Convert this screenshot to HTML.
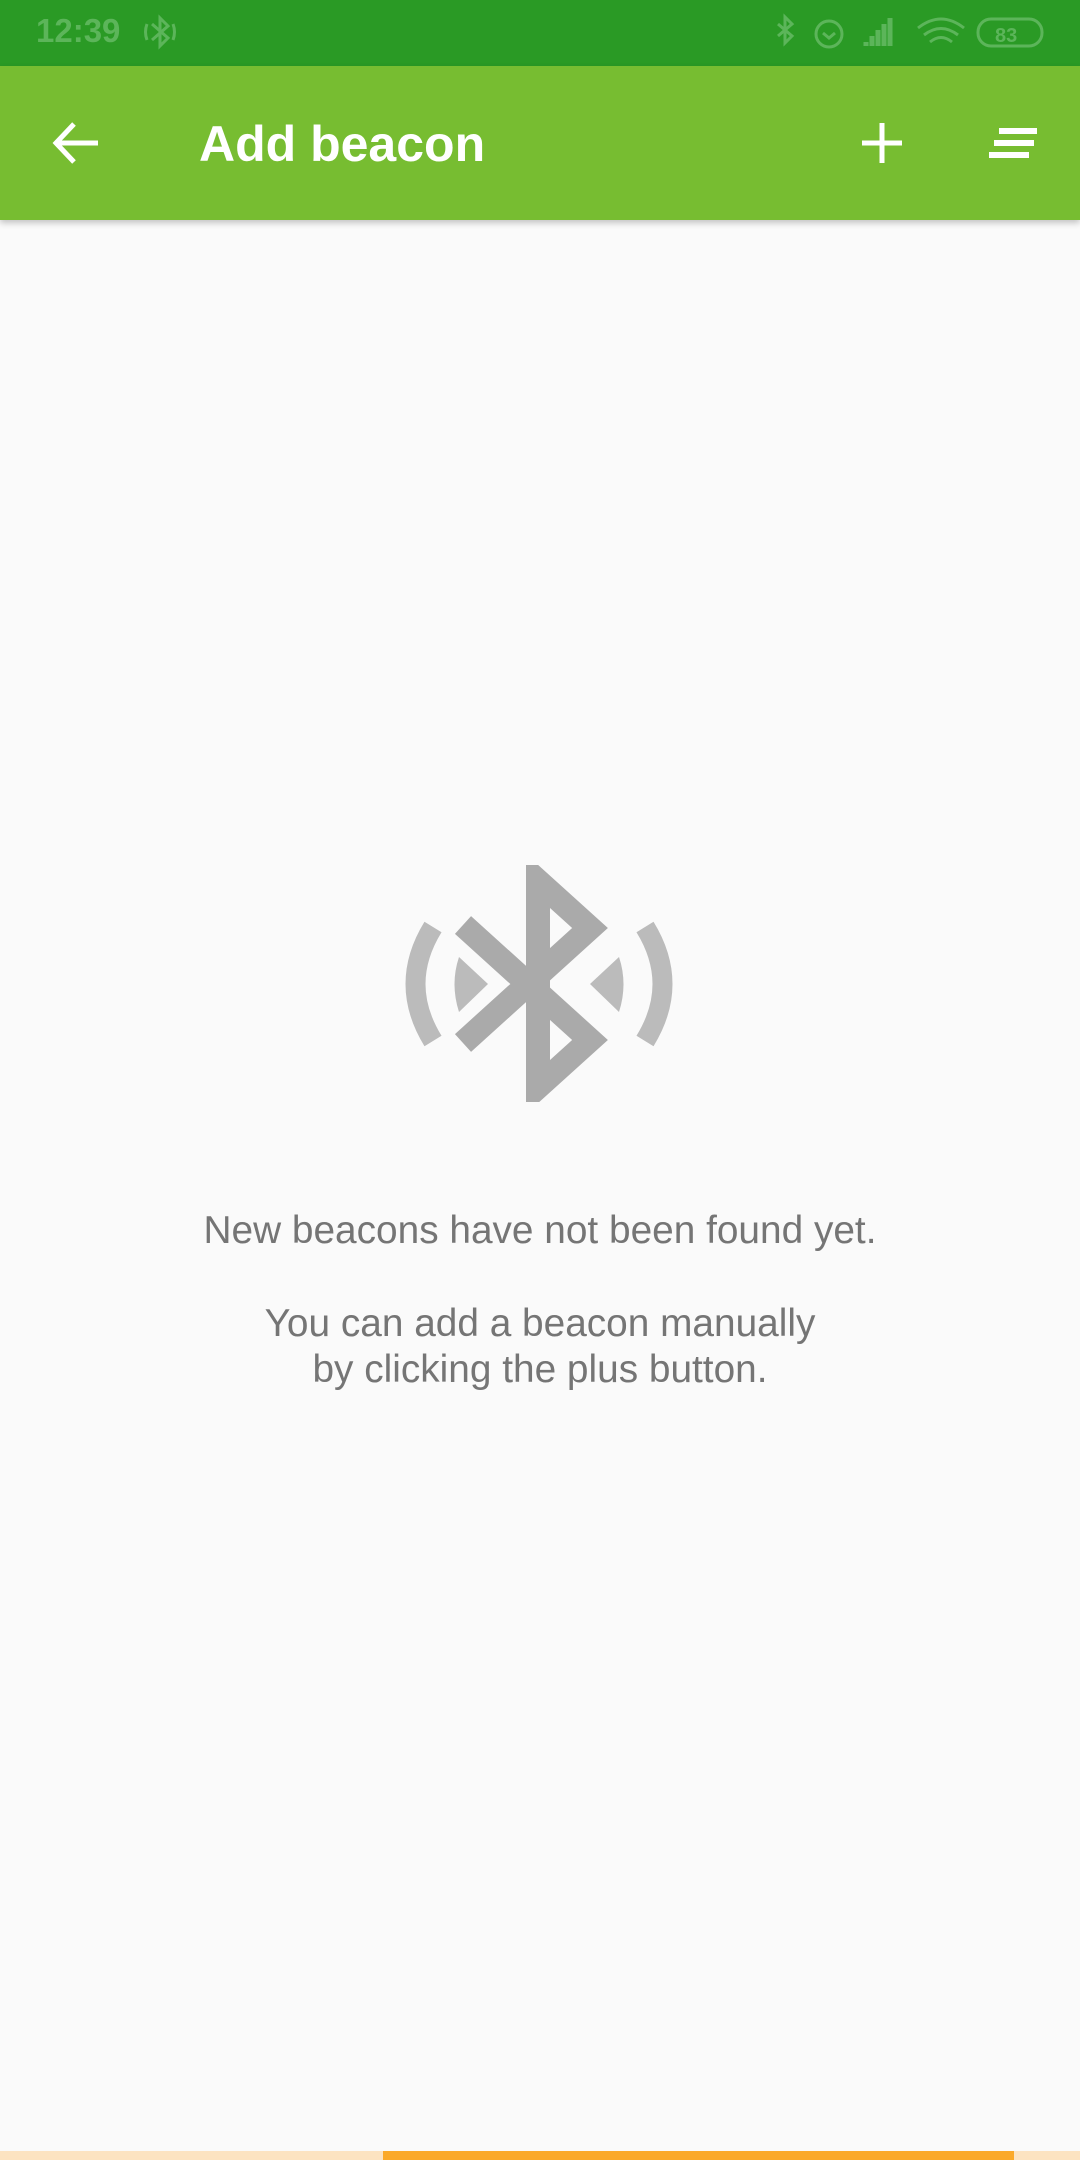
<!DOCTYPE html>
<html><head><meta charset="utf-8"><style>
html,body{margin:0;padding:0;}
body{width:1080px;height:2160px;background:#fafafa;position:relative;overflow:hidden;font-family:"Liberation Sans",sans-serif;}
.sb{position:absolute;left:0;top:0;width:1080px;height:66px;background:#2a9a25;}
.ab{position:absolute;left:0;top:66px;width:1080px;height:154px;background:#77bd31;box-shadow:0 3px 6px rgba(0,0,0,0.22);}
.title{position:absolute;left:199px;top:114px;font-size:50px;font-weight:bold;color:#fff;line-height:60px;}
.msg{position:absolute;left:0;width:1080px;text-align:center;color:#757575;font-size:38.8px;line-height:46px;}
</style></head><body>
<div class="sb">
  <div style="position:absolute;left:36px;top:12px;font-size:33px;font-weight:bold;color:#5cb55a;">12:39</div>
  <svg width="1080" height="66" style="position:absolute;left:0;top:0" fill="none" stroke="#5cb55a" stroke-width="3">
    <path d="M152,24 L168,38 L160,46 L160,18 L168,26 L152,40"/>
    <path d="M147,24 Q144,32 147,40 M173,24 Q176,32 173,40"/>
    <path d="M778,24 L792,36 L785,43 L785,17 L792,24 L778,36"/>
    <circle cx="829" cy="34" r="13"/><path d="M823,33 L829,38 L835,33"/>
    <path d="M866,46 L866,42 M872,46 L872,36 M878,46 L878,30 M884,46 L884,24 M890,46 L890,18" stroke-width="5"/>
    <path d="M918,28 Q941,10 964,28 M924,35 Q941,22 958,35 M930,42 Q941,33 952,42"/>
    <rect x="978" y="19" width="64" height="27" rx="13"/>
    <text x="995" y="42" font-size="20" fill="#5cb55a" stroke="none" font-weight="bold" font-family="Liberation Sans">83</text>
  </svg>
</div>
<div class="ab">
  <svg width="1080" height="154" style="position:absolute;left:0;top:0" fill="none" stroke="#fff" stroke-width="5">
    <path d="M57,77 L98,77 M74,58 L56,77 L74,96"/>
    <path d="M882,57 L882,97 M862,77 L902,77"/>
    <path d="M999,65 L1037,65 M994,77 L1034,77 M989,89 L1029,89" stroke-width="6"/>
  </svg>
</div>
<div class="title">Add beacon</div>
<svg width="1080" height="300" style="position:absolute;left:0;top:840px" viewBox="0 840 1080 300">
  <path d="M463,925 L590,1040 L538,1087 L538,881 L590,928 L463,1043" fill="none" stroke="#aaaaaa" stroke-width="24" stroke-linejoin="miter" stroke-miterlimit="4"/>
  <rect x="520" y="850" width="40" height="15" fill="#fafafa"/>
  <rect x="520" y="1102" width="40" height="15" fill="#fafafa"/>
  <g fill="none" stroke="#bbbbbb" stroke-width="20">
    <path d="M433,927 Q398,984 433,1041"/>
    <path d="M645,927 Q680,984 645,1041"/>
  </g>
  <g fill="#bbbbbb">
    <path d="M459,957 L488,984 L459,1012 Q450,984 459,957 Z"/>
    <path d="M619,957 L590,984 L619,1012 Q628,984 619,957 Z"/>
  </g>
</svg>
<div class="msg" style="top:1208px">New beacons have not been found yet.</div>
<div class="msg" style="top:1301px">You can add a beacon manually<br>by clicking the plus button.</div>
<div style="position:absolute;left:0;top:2151px;width:1080px;height:9px;background:#fce3c1"></div>
<div style="position:absolute;left:383px;top:2151px;width:631px;height:9px;background:#fba929"></div>
</body></html>
